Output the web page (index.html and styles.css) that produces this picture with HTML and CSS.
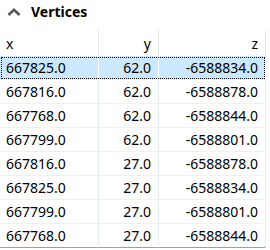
FILE: index.html
```html
<!DOCTYPE html>
<html lang="en">
<head>
    <meta charset="UTF-8">
    <title>Vertices</title>
    <link rel="stylesheet" href="styles.css">
</head>
<body>
    <div class="panel">
        <div class="panel-title">
            <svg class="chevron" width="14" height="8" viewBox="0 0 14 8">
                <path d="M1.5 7 L7 1.8 L12.5 7" fill="none" stroke="#595959" stroke-width="2.6"/>
            </svg>
            <span>Vertices</span>
        </div>
        <table class="grid">
            <colgroup>
                <col class="col-x">
                <col class="col-y">
                <col class="col-z">
            </colgroup>
            <thead>
                <tr><th class="left">x</th><th>y</th><th>z</th></tr>
            </thead>
            <tbody>
                <tr class="selected"><td class="left">667825.0</td><td>62.0</td><td>-6588834.0</td></tr>
                <tr><td class="left">667816.0</td><td>62.0</td><td>-6588878.0</td></tr>
                <tr><td class="left">667768.0</td><td>62.0</td><td>-6588844.0</td></tr>
                <tr><td class="left">667799.0</td><td>62.0</td><td>-6588801.0</td></tr>
                <tr><td class="left">667816.0</td><td>27.0</td><td>-6588878.0</td></tr>
                <tr><td class="left">667825.0</td><td>27.0</td><td>-6588834.0</td></tr>
                <tr><td class="left">667799.0</td><td>27.0</td><td>-6588801.0</td></tr>
                <tr class="last"><td class="left">667768.0</td><td>27.0</td><td>-6588844.0</td></tr>
            </tbody>
        </table>
    </div>
</body>
</html>
```

FILE: styles.css
```css
body {
    margin: 0;
    background: #ffffff;
    font-family: "Noto Sans", "Open Sans", sans-serif;
    color: #000000;
}

.panel {
    width: 270px;
}

.panel-title {
    display: flex;
    align-items: center;
    height: 22px;
    padding-left: 7px;
    gap: 10px;
    font-size: 14px;
    font-weight: bold;
}

.chevron {
    display: block;
    margin-top: 1px;
}

.grid {
    margin-top: 8px;
    width: 266px;
    table-layout: fixed;
    border-collapse: separate;
    border-spacing: 0;
    font-size: 14px;
}

.col-x { width: 99px; }
.col-y { width: 60px; }
.col-z { width: 107px; }

.grid th,
.grid td {
    box-sizing: border-box;
    padding: 0 7px 0 6px;
    text-align: right;
    white-space: nowrap;
    overflow: hidden;
}

.grid th {
    height: 26px;
    font-weight: normal;
    border-right: 1px solid #e5e5e5;
    padding-top: 1px;
}

.grid td {
    height: 24px;
    border-right: 1px solid #e3eaf4;
    border-bottom: 1px solid #f0f0f0;
}

.grid .left {
    text-align: left;
}

.grid tr.selected td {
    background: #cce8ff;
    border-right-color: #ffffff;
}

.grid tr.selected {
    outline: 1px dotted #000000;
    outline-offset: -2px;
}

.grid tr.last td {
    border-bottom-color: #a0a0a0;
}
```
